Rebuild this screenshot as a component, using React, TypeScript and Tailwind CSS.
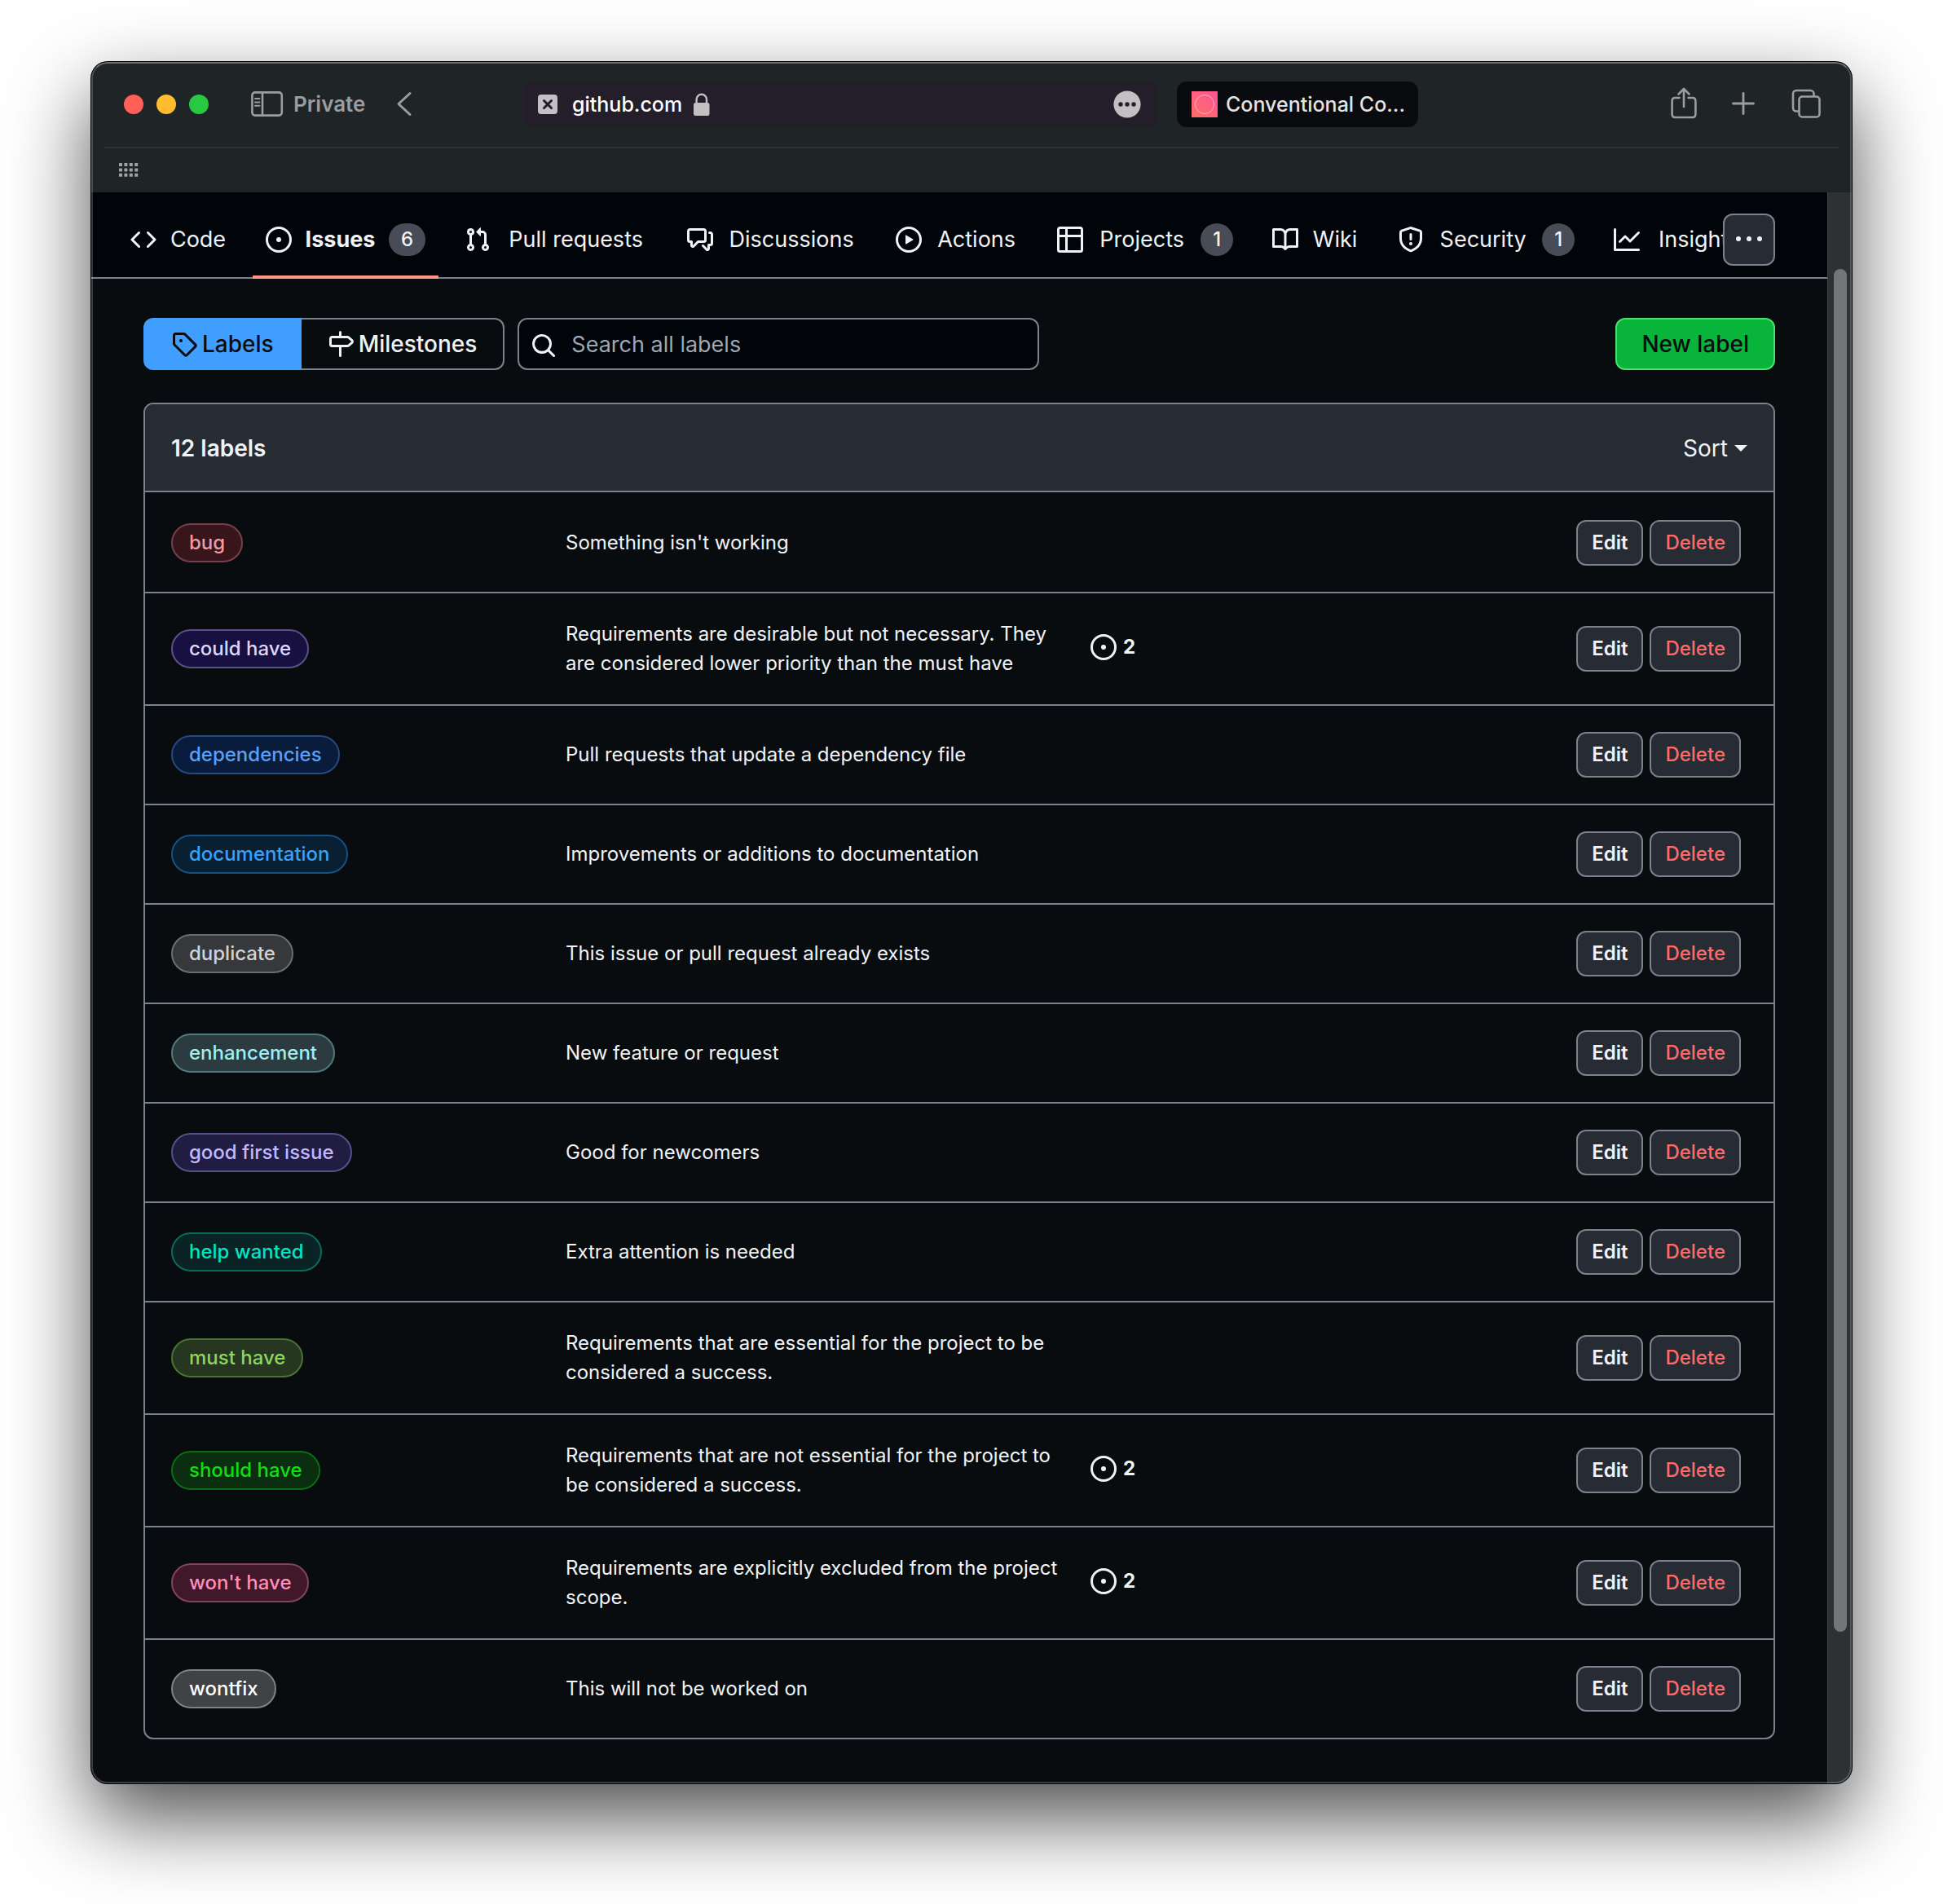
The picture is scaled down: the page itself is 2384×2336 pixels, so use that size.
import type { ReactNode } from "react";

const OCTICONS = {
  code: "m11.28 3.22 4.25 4.25a.75.75 0 0 1 0 1.06l-4.25 4.25a.749.749 0 0 1-1.275-.326.749.749 0 0 1 .215-.734L13.94 8l-3.72-3.72a.749.749 0 0 1 .326-1.275.749.749 0 0 1 .734.215Zm-6.56 0a.751.751 0 0 1 1.042.018.751.751 0 0 1 .018 1.042L2.06 8l3.72 3.72a.749.749 0 0 1-.326 1.275.749.749 0 0 1-.734-.215L.47 8.53a.75.75 0 0 1 0-1.06Z",
  issue: "M8 9.5a1.5 1.5 0 1 0 0-3 1.5 1.5 0 0 0 0 3ZM8 0a8 8 0 1 1 0 16A8 8 0 0 1 8 0ZM1.5 8a6.5 6.5 0 1 0 13 0 6.5 6.5 0 0 0-13 0Z",
  pull: "M1.5 3.25a2.25 2.25 0 1 1 3 2.122v5.256a2.251 2.251 0 1 1-1.5 0V5.372A2.25 2.25 0 0 1 1.5 3.25Zm5.677-.177L9.573.677A.25.25 0 0 1 10 .854V2.5h1A2.5 2.5 0 0 1 13.5 5v5.628a2.251 2.251 0 1 1-1.5 0V5a1 1 0 0 0-1-1h-1v1.646a.25.25 0 0 1-.427.177L7.177 3.427a.25.25 0 0 1 0-.354ZM3.75 2.5a.75.75 0 1 0 0 1.5.75.75 0 0 0 0-1.5Zm0 9.5a.75.75 0 1 0 0 1.5.75.75 0 0 0 0-1.5Zm8.25.75a.75.75 0 1 0 1.5 0 .75.75 0 0 0-1.5 0Z",
  discussion:
    "M1.75 1h8.5c.966 0 1.75.784 1.75 1.75v5.5A1.75 1.75 0 0 1 10.25 10H7.061l-2.574 2.573A1.458 1.458 0 0 1 2 11.543V10h-.25A1.75 1.75 0 0 1 0 8.25v-5.5C0 1.784.784 1 1.75 1ZM1.5 2.75v5.5c0 .138.112.25.25.25h1a.75.75 0 0 1 .75.75v2.19l2.72-2.72a.749.749 0 0 1 .53-.22h3.5a.25.25 0 0 0 .25-.25v-5.5a.25.25 0 0 0-.25-.25h-8.5a.25.25 0 0 0-.25.25Zm13 2a.25.25 0 0 0-.25-.25h-.5a.75.75 0 0 1 0-1.5h.5c.966 0 1.75.784 1.75 1.75v5.5A1.75 1.75 0 0 1 14.25 12H14v1.543a1.458 1.458 0 0 1-2.487 1.03L9.22 12.28a.749.749 0 0 1 .326-1.275.749.749 0 0 1 .734.215l2.22 2.22v-2.19a.75.75 0 0 1 .75-.75h1a.25.25 0 0 0 .25-.25Z",
  play: "M8 0a8 8 0 1 1 0 16A8 8 0 0 1 8 0ZM1.5 8a6.5 6.5 0 1 0 13 0 6.5 6.5 0 0 0-13 0Zm4.879-2.773 4.264 2.559a.25.25 0 0 1 0 .428l-4.264 2.559A.25.25 0 0 1 6 10.559V5.442a.25.25 0 0 1 .379-.215Z",
  table:
    "M0 1.75C0 .784.784 0 1.75 0h12.5C15.216 0 16 .784 16 1.75v12.5A1.75 1.75 0 0 1 14.25 16H1.75A1.75 1.75 0 0 1 0 14.25ZM6.5 6.5v8h7.75a.25.25 0 0 0 .25-.25V6.5Zm8-1.5V1.75a.25.25 0 0 0-.25-.25H6.5V5Zm-13 1.5v7.75c0 .138.112.25.25.25H5v-8ZM5 5V1.5H1.75a.25.25 0 0 0-.25.25V5Z",
  book: "M0 1.75A.75.75 0 0 1 .75 1h4.253c1.227 0 2.317.59 3 1.501A3.743 3.743 0 0 1 11.006 1h4.245a.75.75 0 0 1 .75.75v10.5a.75.75 0 0 1-.75.75h-4.507a2.25 2.25 0 0 0-1.591.659l-.622.621a.75.75 0 0 1-1.06 0l-.622-.621A2.25 2.25 0 0 0 5.258 13H.75a.75.75 0 0 1-.75-.75Zm7.251 10.324.004-5.073-.002-2.253A2.25 2.25 0 0 0 5.003 2.5H1.5v9h3.757a3.75 3.75 0 0 1 1.994.574ZM8.755 4.75l-.004 7.322a3.752 3.752 0 0 1 1.992-.572H14.5v-9h-3.495a2.25 2.25 0 0 0-2.25 2.25Z",
  shield:
    "M7.467.133a1.748 1.748 0 0 1 1.066 0l5.25 1.68A1.75 1.75 0 0 1 15 3.48V7c0 1.566-.32 3.182-1.303 4.682-.983 1.498-2.585 2.813-5.032 3.855a1.697 1.697 0 0 1-1.33 0c-2.447-1.042-4.049-2.357-5.032-3.855C1.32 10.182 1 8.566 1 7V3.48a1.755 1.755 0 0 1 1.217-1.667Zm.61 1.429a.25.25 0 0 0-.153 0l-5.25 1.68a.25.25 0 0 0-.174.238V7c0 1.358.275 2.666 1.057 3.86.784 1.194 2.121 2.34 4.366 3.297a.196.196 0 0 0 .154 0c2.245-.956 3.582-2.104 4.366-3.298C13.225 9.666 13.5 8.36 13.5 7V3.48a.251.251 0 0 0-.174-.237l-5.25-1.68ZM8.75 4.75v3a.75.75 0 0 1-1.5 0v-3a.75.75 0 0 1 1.5 0ZM9 10.5a1 1 0 1 1-2 0 1 1 0 0 1 2 0Z",
  graph:
    "M1.5 1.75V13.5h13.75a.75.75 0 0 1 0 1.5H.75a.75.75 0 0 1-.75-.75V1.75a.75.75 0 0 1 1.5 0Zm14.28 2.53-5.25 5.25a.75.75 0 0 1-1.06 0L7 7.06 4.28 9.78a.751.751 0 0 1-1.042-.018.751.751 0 0 1-.018-1.042l3.25-3.25a.75.75 0 0 1 1.06 0L10 7.94l4.72-4.72a.751.751 0 0 1 1.042.018.751.751 0 0 1 .018 1.042Z",
  kebab:
    "M8 9a1.5 1.5 0 1 0 0-3 1.5 1.5 0 0 0 0 3ZM1.5 9a1.5 1.5 0 1 0 0-3 1.5 1.5 0 0 0 0 3Zm13 0a1.5 1.5 0 1 0 0-3 1.5 1.5 0 0 0 0 3Z",
  tag: "M1 7.775V2.75C1 1.784 1.784 1 2.75 1h5.025c.464 0 .91.184 1.238.513l6.25 6.25a1.75 1.75 0 0 1 0 2.474l-5.026 5.026a1.75 1.75 0 0 1-2.474 0l-6.25-6.25A1.752 1.752 0 0 1 1 7.775Zm1.5 0c0 .066.026.13.073.177l6.25 6.25a.25.25 0 0 0 .354 0l5.025-5.025a.25.25 0 0 0 0-.354l-6.25-6.25a.25.25 0 0 0-.177-.073H2.75a.25.25 0 0 0-.25.25ZM6 5a1 1 0 1 1 0 2 1 1 0 0 1 0-2Z",
  milestone:
    "M7.75 0a.75.75 0 0 1 .75.75V3h3.634c.414 0 .814.147 1.13.414l2.07 1.75a1.75 1.75 0 0 1 0 2.672l-2.07 1.75a1.75 1.75 0 0 1-1.13.414H8.5v5.25a.75.75 0 0 1-1.5 0V10H2.75A1.75 1.75 0 0 1 1 8.25v-3.5C1 3.784 1.784 3 2.75 3H7V.75A.75.75 0 0 1 7.75 0Zm4.384 8.5a.25.25 0 0 0 .161-.06l2.07-1.75a.248.248 0 0 0 0-.38l-2.07-1.75a.25.25 0 0 0-.161-.06H2.75a.25.25 0 0 0-.25.25v3.5c0 .138.112.25.25.25h9.384Z",
  search:
    "M10.68 11.74a6 6 0 0 1-7.922-8.982 6 6 0 0 1 8.982 7.922l3.04 3.04a.749.749 0 0 1-.326 1.275.749.749 0 0 1-.734-.215ZM11.5 7a4.499 4.499 0 1 0-8.997 0A4.499 4.499 0 0 0 11.5 7Z",
};

type IconName = keyof typeof OCTICONS;

function Octicon({ name }: { name: IconName }) {
  return (
    <svg viewBox="0 0 16 16" className="size-8 shrink-0" fill="currentColor" aria-hidden="true">
      <path d={OCTICONS[name]} />
    </svg>
  );
}

/* ---------- Browser chrome ---------- */

function Toolbar() {
  return (
    <div className="flex h-[104px] items-center text-[25px] leading-8 font-medium text-[#9b9d9f]">
      <div className="flex w-[530px] shrink-0 items-center pl-10">
        <div className="flex gap-4">
          <button aria-label="Close window" className="size-6 rounded-full bg-[#ff5f57]" />
          <button aria-label="Minimize window" className="size-6 rounded-full bg-[#febc2e]" />
          <button aria-label="Zoom window" className="size-6 rounded-full bg-[#28c840]" />
        </div>
        <button aria-label="Show sidebar" className="ml-[52px]">
          <svg viewBox="0 0 40 32" className="h-8 w-10" fill="none" stroke="currentColor" strokeWidth="2.6" aria-hidden="true">
            <rect x="1.4" y="1.4" width="36.4" height="28.2" rx="3.5" />
            <path d="M14 1.4v28.2" />
            <path d="M5 9h5.4M5 13.4h5.4M5 17.8h5.4" strokeWidth="2" strokeLinecap="round" />
          </svg>
        </button>
        <span className="ml-3 text-[26px] font-semibold">Private</span>
        <button aria-label="Back" className="ml-[38px]">
          <svg viewBox="0 0 20 32" className="h-8 w-5" fill="none" stroke="currentColor" strokeWidth="3" strokeLinecap="round" strokeLinejoin="round" aria-hidden="true">
            <path d="M17 2.5 3 15.5l14 13" />
          </svg>
        </button>
      </div>

      <div className="flex h-14 min-w-0 flex-1 items-center rounded-xl bg-[#241d2a] pr-5 pl-[18px] text-white">
        <svg viewBox="0 0 24 24" className="size-6 shrink-0" aria-hidden="true">
          <rect width="24" height="24" rx="4" fill="#c2c0c3" />
          <path d="m7.5 7.5 9 9m0-9-9 9" stroke="#241d2a" strokeWidth="3" strokeLinecap="round" />
        </svg>
        <span className="ml-[18px]">github.com</span>
        <svg viewBox="0 0 20 28" className="ml-3.5 h-7 w-5" aria-hidden="true">
          <rect y="12" width="19.5" height="16" rx="2.5" fill="#c2c0c3" />
          <path d="M3.6 13V8a6.2 6.2 0 0 1 12.4 0v5" fill="none" stroke="#c2c0c3" strokeWidth="2.4" />
        </svg>
        <button aria-label="Page menu" className="ml-auto">
          <svg viewBox="0 0 34 34" className="size-[34px]" aria-hidden="true">
            <circle cx="17" cy="17" r="16.6" fill="#c2c0c3" />
            <circle cx="9" cy="17" r="2.7" fill="#241d2a" />
            <circle cx="17" cy="17" r="2.7" fill="#241d2a" />
            <circle cx="25" cy="17" r="2.7" fill="#241d2a" />
          </svg>
        </button>
      </div>

      <button className="ml-6 flex h-14 w-[296px] shrink-0 items-center gap-2.5 rounded-xl bg-[#0a0b0f] pl-[18px] text-[#e3e4e5]">
        <span className="flex size-8 items-center justify-center bg-linear-to-tr from-[#fe6f61] to-[#fe5196]">
          <span className="size-6 rounded-full border border-[#ffb3c4]" />
        </span>
        Conventional Co...
      </button>

      <div className="flex w-[532px] shrink-0 items-center justify-end pr-[38px] pb-0.5">
        <button aria-label="Share">
          <svg viewBox="0 0 32 40" className="h-10 w-8" fill="none" stroke="currentColor" strokeWidth="2.6" strokeLinecap="round" strokeLinejoin="round" aria-hidden="true">
            <path d="M10.5 13H5a3.4 3.4 0 0 0-3.4 3.4v17.2A3.4 3.4 0 0 0 5 37h22a3.4 3.4 0 0 0 3.4-3.4V16.4A3.4 3.4 0 0 0 27 13h-5.5" />
            <path d="M16 24V2.5M9.5 8.5 16 2l6.5 6.5" />
          </svg>
        </button>
        <button aria-label="New tab" className="ml-[41px]">
          <svg viewBox="0 0 32 32" className="size-8" fill="none" stroke="currentColor" strokeWidth="2.8" strokeLinecap="round" aria-hidden="true">
            <path d="M16 3.5v25M3.5 16h25" />
          </svg>
        </button>
        <button aria-label="Tab overview" className="ml-[43px]">
          <svg viewBox="0 0 36 36" className="size-9" fill="none" stroke="currentColor" strokeWidth="2.6" aria-hidden="true">
            <rect x="9.5" y="9.5" width="25" height="25" rx="3.8" />
            <path d="M9.5 27.5H6a4 4 0 0 1-4-4V6a4 4 0 0 1 4-4h17.5a4 4 0 0 1 4 4v3.5" />
          </svg>
        </button>
      </div>
    </div>
  );
}

function FavoritesBar() {
  return (
    <div className="mx-4 flex h-14 items-center border-t-2 border-[#2e3235] pl-[18px]">
      <button aria-label="Show favorites">
        <svg viewBox="0 0 24 18" className="h-[18px] w-6" fill="#a0a2a4" aria-hidden="true">
          {[0, 6.4, 12.8].map((y) =>
            [0, 6.4, 12.8, 19.2].map((x) => <rect key={`${x}-${y}`} x={x} y={y} width="4" height="4" rx="0.6" />),
          )}
        </svg>
      </button>
    </div>
  );
}

/* ---------- Repository navigation ---------- */

type Tab = { icon: IconName; text: string; width: string; count?: number; active?: boolean };

const TABS: Tab[] = [
  { icon: "code", text: "Code", width: "w-[70px]" },
  { icon: "issue", text: "Issues", width: "w-[87px]", count: 6, active: true },
  { icon: "pull", text: "Pull requests", width: "w-[177px]" },
  { icon: "discussion", text: "Discussions", width: "w-[160px]" },
  { icon: "play", text: "Actions", width: "w-[102px]" },
  { icon: "table", text: "Projects", width: "w-[112px]", count: 1 },
  { icon: "book", text: "Wiki", width: "w-[58px]" },
  { icon: "shield", text: "Security", width: "w-[113px]", count: 1 },
  { icon: "graph", text: "Insights", width: "w-[113px]" },
];

function RepoNav() {
  return (
    <nav className="relative border-b-2 border-[#7a828e] bg-[#010409] px-8 pt-3.5" aria-label="Repository">
      <ul className="flex gap-4 text-[27px] leading-10">
        {TABS.map((tab) => (
          <li
            key={tab.text}
            className={
              tab.active
                ? "-mb-0.5 shrink-0 border-b-4 border-[#ff967d] font-bold"
                : "-mb-0.5 shrink-0 border-b-4 border-transparent"
            }
          >
            <a href="#" className="flex h-[88px] items-center gap-4 px-4">
              <Octicon name={tab.icon} />
              <span className={`${tab.width} flex justify-center whitespace-nowrap`}>{tab.text}</span>
              {tab.count !== undefined && (
                <span className="h-10 min-w-10 rounded-full bg-[#474c56] px-[15px] text-center text-2xl leading-10 font-medium">
                  {tab.count}
                </span>
              )}
            </a>
          </li>
        ))}
      </ul>
      <button
        aria-label="More"
        className="absolute top-[26px] right-16 flex size-16 items-center justify-center rounded-xl border-2 border-[#7a828e] bg-[#272b33]"
      >
        <Octicon name="kebab" />
      </button>
    </nav>
  );
}

/* ---------- Labels ---------- */

type Label = { name: string; tone: string; description: string; issues?: number };

const LABELS: Label[] = [
  { name: "bug", tone: "bg-[#38141b] border-[#75404a] text-[#f09aa1]", description: "Something isn't working" },
  {
    name: "could have",
    tone: "bg-[#181040] border-[#5a5284] text-[#ddd6ff]",
    description: "Requirements are desirable but not necessary. They are considered lower priority than the must have",
    issues: 2,
  },
  { name: "dependencies", tone: "bg-[#0a1c3b] border-[#254a80] text-[#58a1f8]", description: "Pull requests that update a dependency file" },
  { name: "documentation", tone: "bg-[#092033] border-[#175082] text-[#35a3fb]", description: "Improvements or additions to documentation" },
  { name: "duplicate", tone: "bg-[#37383c] border-[#6b6d71] text-[#cfd3d7]", description: "This issue or pull request already exists" },
  { name: "enhancement", tone: "bg-[#2b3b40] border-[#4f7a7b] text-[#a2eeef]", description: "New feature or request" },
  { name: "good first issue", tone: "bg-[#211c42] border-[#56508a] text-[#c1b8ff]", description: "Good for newcomers" },
  { name: "help wanted", tone: "bg-[#0a2426] border-[#0a6a60] text-[#00e6c4]", description: "Extra attention is needed" },
  {
    name: "must have",
    tone: "bg-[#263620] border-[#4a7434] text-[#8cd85c]",
    description: "Requirements that are essential for the project to be considered a success.",
  },
  {
    name: "should have",
    tone: "bg-[#0b2d10] border-[#0d6c13] text-[#0ee00e]",
    description: "Requirements that are not essential for the project to be considered a success.",
    issues: 2,
  },
  {
    name: "won't have",
    tone: "bg-[#411829] border-[#83435f] text-[#ff8dbc]",
    description: "Requirements are explicitly excluded from the project scope.",
    issues: 2,
  },
  { name: "wontfix", tone: "bg-[#414244] border-[#808183] text-[#ffffff]", description: "This will not be worked on" },
];

function RowButton({ tone, children }: { tone: string; children: ReactNode }) {
  return (
    <button className={`h-14 rounded-xl border-2 border-[#7a828e] bg-[#272b33] px-[17px] text-2xl leading-9 ${tone}`}>
      {children}
    </button>
  );
}

function LabelRow({ label, first }: { label: Label; first: boolean }) {
  return (
    <tr className={first ? "*:border-t-2 *:border-transparent" : "*:border-t-2 *:border-[#7a828e]"}>
      <td className="w-[516px] py-8 pl-8">
        <div className="flex">
          <a href="#" className={`rounded-full border-2 px-5 text-2xl leading-11 font-medium ${label.tone}`}>
            {label.name}
          </a>
        </div>
      </td>
      <td className="w-[644px] py-8 pr-8 text-2xl leading-9">{label.description}</td>
      <td className="pt-7 pb-8">
        {label.issues !== undefined && (
          <a href="#" className="flex items-center gap-2 text-2xl leading-9 font-bold">
            <Octicon name="issue" />
            {label.issues}
          </a>
        )}
      </td>
      <td className="w-[280px] py-8 pr-10">
        <div className="flex justify-end gap-2">
          <RowButton tone="font-semibold text-[#f0f3f6]">Edit</RowButton>
          <RowButton tone="font-medium text-[#ff6a69]">Delete</RowButton>
        </div>
      </td>
    </tr>
  );
}

function LabelsPage() {
  return (
    <main className="px-16 pt-12 pb-[54px]">
      <div className="flex h-16 items-stretch text-[28px] leading-10">
        <nav className="flex font-medium" aria-label="Issues">
          <a href="#" className="flex items-center gap-1.5 rounded-l-xl bg-[#409eff] px-[34px] text-[#0a0c10]">
            <Octicon name="tag" />
            Labels
          </a>
          <a href="#" className="flex items-center gap-1.5 rounded-r-xl border-y-2 border-r-2 border-[#7a828e] px-8">
            <Octicon name="milestone" />
            Milestones
          </a>
        </nav>
        <div className="relative ml-4 w-[640px]">
          <span className="absolute top-[18px] left-4">
            <Octicon name="search" />
          </span>
          <input
            type="search"
            aria-label="Search all labels"
            placeholder="Search all labels"
            className="h-16 w-full rounded-xl border-2 border-[#7a828e] bg-[#010409] pr-4 pl-16 text-[27px] placeholder:text-[#9ea7b3]"
          />
        </div>
        <button className="ml-auto rounded-xl border-2 border-[#4ae168] bg-[#09b43a] px-[30px] font-medium text-[#0a0c10]">
          New label
        </button>
      </div>

      <section className="mt-10 overflow-hidden rounded-xl border-2 border-[#7a828e]">
        <header className="flex h-[108px] items-center justify-between border-b-2 border-[#7a828e] bg-[#272b33] px-8 pt-0.5 text-[28px] leading-10">
          <h1 className="font-semibold">12 labels</h1>
          <button className="flex items-center gap-2">
            Sort
            <svg viewBox="0 0 16 8" className="h-2 w-4" fill="currentColor" aria-hidden="true">
              <path d="M0 0h16L8 8Z" />
            </svg>
          </button>
        </header>
        <table className="w-full table-fixed border-separate border-spacing-0">
          <tbody>
            {LABELS.map((label, i) => (
              <LabelRow key={label.name} label={label} first={i === 0} />
            ))}
          </tbody>
        </table>
      </section>
    </main>
  );
}

export default function App() {
  return (
    <div className="min-h-screen bg-white px-28 pt-[76px] pb-[148px] font-[Inter,sans-serif] text-[#f0f3f6]">
      <div className="relative overflow-hidden rounded-[20px] bg-[#1f2427] shadow-[0_0_0_1px_#000,0_42px_100px_rgba(0,0,0,0.7)]">
        <Toolbar />
        <FavoritesBar />
        <div className="flex">
          <div className="min-w-0 flex-1 bg-[#090c0f]">
            <RepoNav />
            <LabelsPage />
          </div>
          <div className="flex w-[30px] border-l border-[#414547] bg-[#2d3134] pt-[94px] pr-1.5 pb-[186px] pl-[7px]">
            <div className="flex-1 rounded-full bg-[#727677]" />
          </div>
        </div>
        <div className="pointer-events-none absolute inset-0 rounded-[20px] border-2 border-white/20 border-t-white/35" />
      </div>
    </div>
  );
}
